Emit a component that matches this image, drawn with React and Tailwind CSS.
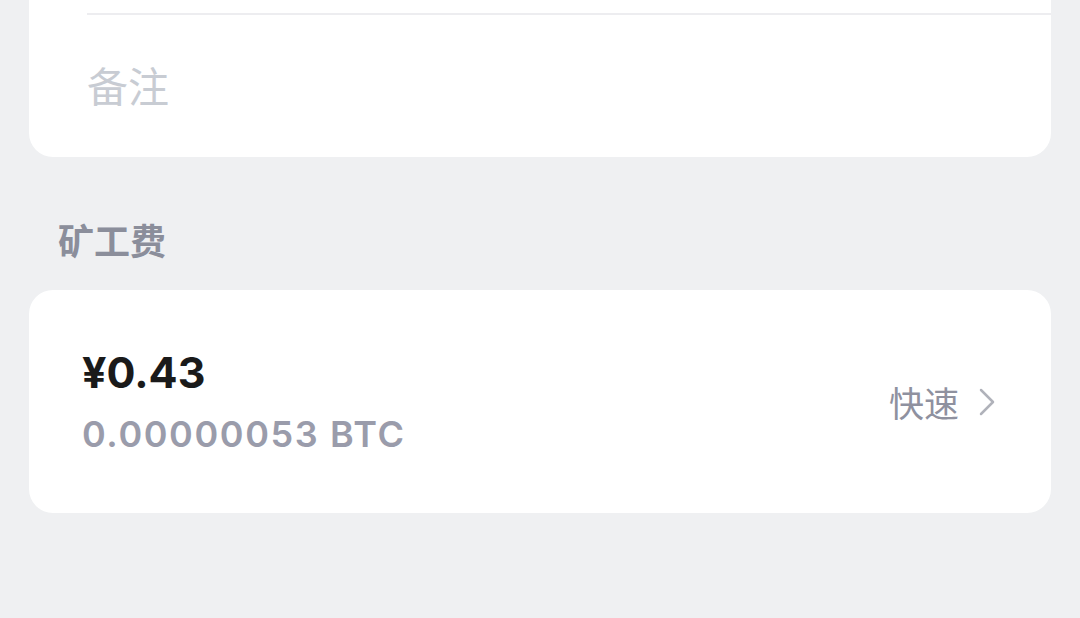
export default function App() {
  const cjk = { fontFamily: '"Noto Sans CJK SC", "Noto Sans", sans-serif' };
  const latin = { fontFamily: 'Inter, "Noto Sans CJK SC", sans-serif' };
  return (
    <div className="w-[1080px] h-[618px] bg-[#eff0f2] overflow-hidden" style={cjk}>
      <div className="mx-[29px] bg-white rounded-b-[24px] pt-[13px] pb-[48px]">
        <div className="ml-[58px] h-[2px] bg-[#ededf0]" />
        <div className="mt-[44px] ml-[58px] text-[41px] leading-[50px] text-[#c8ccd3]">备注</div>
      </div>
      <div className="pt-[62px] mb-[31px] pl-[58px] text-[36px] leading-[40px] font-bold text-[#8b8e9b]">矿工费</div>
      <div className="mx-[29px] h-[223px] bg-white rounded-[24px] flex items-center justify-between pl-[53px] pr-[54px]">
        <div className="flex flex-col -mt-[3px]">
          <div className="text-[43px] leading-[50px] font-bold text-[#1a1a1a]" style={latin}>¥0.43</div>
          <div className="mt-[17px] text-[36px] leading-[40px] font-semibold text-[#9a9cab] tracking-[1.6px]" style={latin}>0.00000053 BTC</div>
        </div>
        <div className="flex items-center gap-[18px]">
          <span className="text-[35px] leading-[40px] text-[#8f919f]">快速</span>
          <svg width="20" height="28" viewBox="0 0 20 28" fill="none">
            <path d="M4 2 L16 14 L4 26" stroke="#b0b2ba" strokeWidth="2.5" strokeLinecap="round" strokeLinejoin="round" />
          </svg>
        </div>
      </div>
    </div>
  );
}
